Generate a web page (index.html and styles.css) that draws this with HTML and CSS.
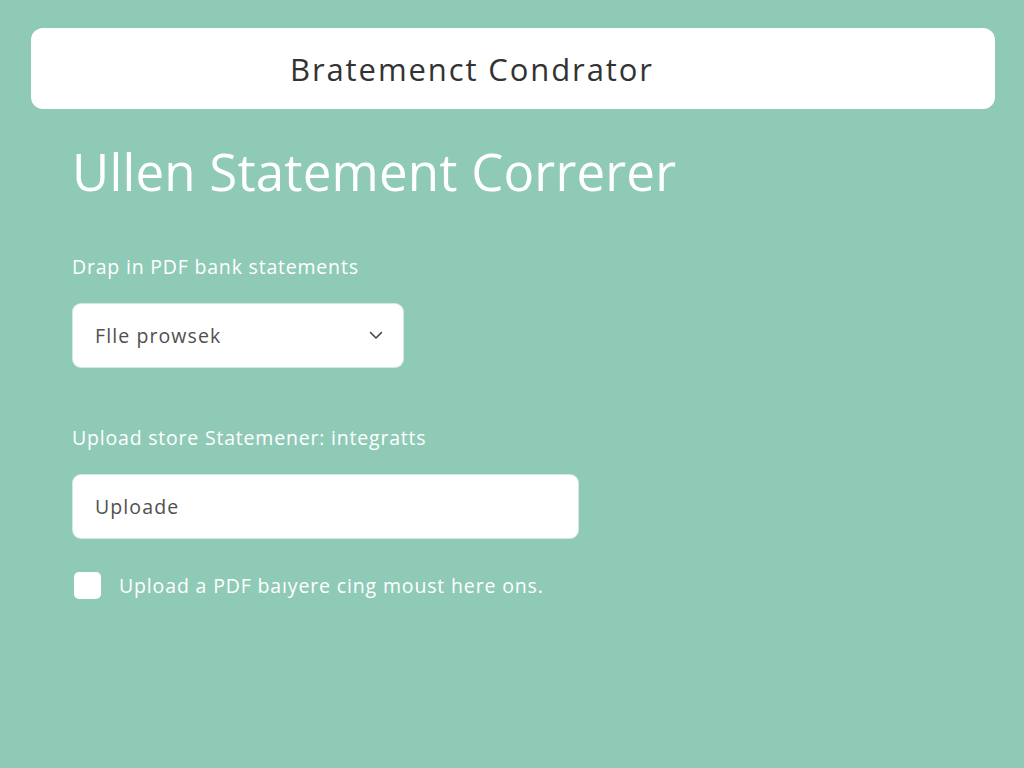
FILE: index.html
```html
<!DOCTYPE html>
<html>
<head>
<meta charset="utf-8">
<link rel="stylesheet" href="styles.css">
</head>
<body>
<div class="page">
  <header class="topbar">
    <span class="topbar-title">Bratemenct Condrator</span>
  </header>
  <main class="content">
    <h1 class="title">Ullen Statement Correrer</h1>
    <div class="field">
      <div class="label">Drap in PDF bank statements</div>
      <div class="select">
        <span>Flle prowsek</span>
        <svg class="chev" width="14" height="9" viewBox="0 0 14 9"><path d="M1.5 1.5 L7 7 L12.5 1.5" fill="none" stroke="#444" stroke-width="1.6" stroke-linecap="round" stroke-linejoin="round"/></svg>
      </div>
    </div>
    <div class="field field2">
      <div class="label">Upload store Statemener: integratts</div>
      <div class="input"><span>Uploade</span></div>
    </div>
    <label class="check">
      <span class="box"></span>
      <span class="check-text">Upload a PDF baıyere cing moust here ons.</span>
    </label>
  </main>
</div>
</body>
</html>
```

FILE: styles.css
```css
html, body {
  margin: 0;
  padding: 0;
}
body {
  width: 1024px;
  height: 768px;
  background: #8fcab7;
  font-family: "Open Sans", "Liberation Sans", sans-serif;
  overflow: hidden;
}
.page {
  padding: 28px 29px 0 31px;
}
.topbar {
  height: 81px;
  background: #ffffff;
  border-radius: 12px;
  display: flex;
  align-items: center;
  padding-left: 259px;
}
.topbar-title {
  font-size: 31px;
  color: #333333;
  letter-spacing: 1.9px;
}
.content {
  padding-left: 41px;
}
.title {
  margin: 32px 0 0 0;
  font-weight: 400;
  font-size: 51px;
  line-height: 60px;
  color: #ffffff;
  letter-spacing: 0.2px;
}
.field {
  margin-top: 53px;
}
.label {
  font-size: 19.5px;
  line-height: 26px;
  color: #ffffff;
  letter-spacing: 0.8px;
}
.select, .input {
  margin-top: 24px;
  margin-left: 1px;
  height: 63px;
  background: #ffffff;
  border-radius: 8px;
  box-sizing: border-box;
  display: flex;
  align-items: center;
  padding: 0 20px 0 22px;
  font-size: 19.5px;
  letter-spacing: 1.1px;
  color: #505050;
  box-shadow: 0 0 0 1px rgba(255,255,255,0.6);
}
.select {
  width: 330px;
  justify-content: space-between;
}
.input {
  width: 505px;
}
.field2 {
  margin-top: 58px;
}
.check {
  margin-top: 34px;
  margin-left: 2px;
  display: flex;
  align-items: center;
  gap: 18px;
}
.box {
  width: 27px;
  height: 27px;
  background: #ffffff;
  border-radius: 5px;
}
.check-text {
  font-size: 19.5px;
  color: #ffffff;
  letter-spacing: 0.85px;
}
```
